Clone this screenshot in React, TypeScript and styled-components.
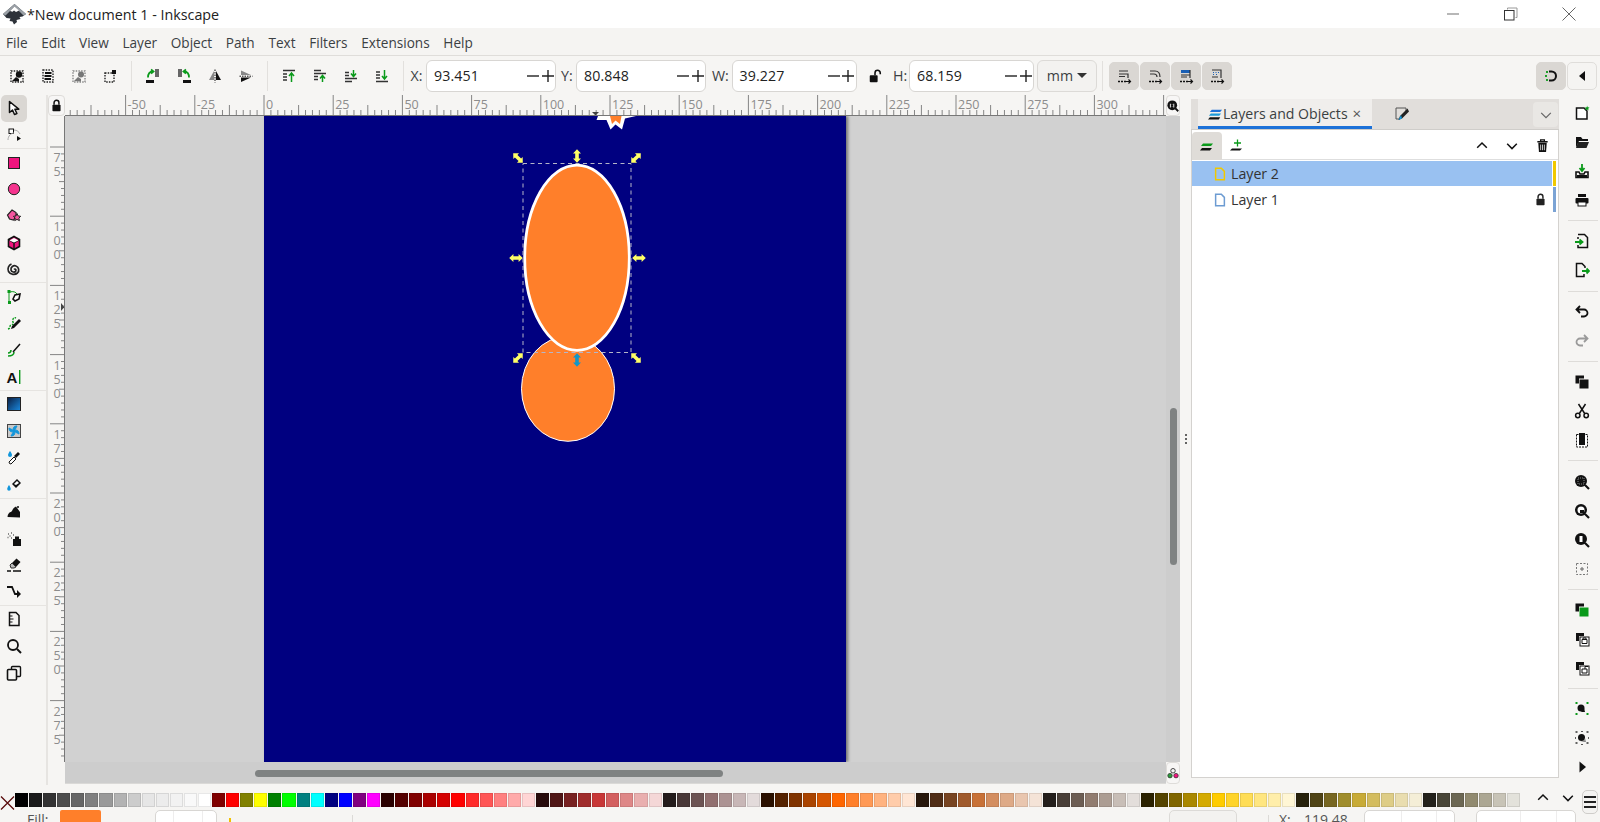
import React from "react";
import styled, { createGlobalStyle } from "styled-components";

const UI = '"Open Sans","Noto Sans",sans-serif';
const BG = "#f6f5f3";

const Global = createGlobalStyle`
  html, body { margin: 0; padding: 0; background: ${BG}; }
  body { font-family: ${UI}; color: #2e3436; overflow: hidden; }
  * { box-sizing: border-box; }
`;

const Shell = styled.div`
  width: 1600px; height: 822px; overflow: hidden; display: flex; flex-direction: column; background: ${BG};
`;
const TitleBar = styled.div`
  height: 28px; flex: none; background: #fff; display: flex; align-items: center; padding-left: 2px; padding-right: 2px;
`;
const TitleText = styled.span`
  font-size: 14.3px; margin-left: 0; color: #222; white-space: nowrap;
`;
const WindowControls = styled.div`margin-left: auto; display: flex;`;
const WindowButton = styled.div`
  width: 58px; height: 28px; display: flex; align-items: center; justify-content: center;
`;
const MenuBar = styled.div`
  height: 28px; flex: none; display: flex; align-items: center; padding: 2px 0 0 6px; gap: 13.700px;
  border-bottom: 1px solid #dfddda; font-size: 13.600px; background: #f5f4f2;
`;
const MenuItem = styled.span`color: #3b4043; white-space: nowrap;`;
const Toolbar = styled.div`
  height: 39px; flex: none; display: flex; align-items: center; padding-left: 1.500px; padding-right: 3px;
`;
const TopIcon = styled.div`
  width: 31px; height: 28px; flex: none; display: flex; align-items: center; justify-content: center;
`;
const VSep = styled.div`
  width: 1px; height: 30px; margin: 0 5.500px; background: #e2e0dd; flex: none;
`;
const Field = styled.div`display: flex; align-items: center; flex: none;`;
const FieldLabel = styled.span<{ $w: number; $m: number }>`
  width: ${(p) => p.$w}px; margin-left: ${(p) => p.$m}px; font-size: 14.200px; color: #3b4043; flex: none;
`;
const SpinBox = styled.div<{ $w: number }>`
  width: ${(p) => p.$w}px; height: 32px; background: #fff; border: 1px solid #d8d6d3; border-radius: 6px;
  display: flex; align-items: center; padding-left: 7px; position: relative; font-size: 14.200px; color: #222; flex: none;
`;
const SpinValue = styled.span`flex: 1; letter-spacing: .1px;`;
const SpinBtn = styled.span`
  width: 14.500px; height: 30px; display: flex; align-items: center; justify-content: center; flex: none;
`;
const LockSlot = styled.div`width: 36.400px; display: flex; justify-content: center; flex: none;`;
const UnitBox = styled.div`
  width: 60px; height: 32px; margin-left: 3px; border: 1px solid #dcdad7; border-radius: 6px; background: #f3f2f0;
  display: flex; align-items: center; justify-content: center; gap: 4px; font-size: 14.200px; flex: none; color: #3b4043;
`;
const Caret = styled.span`
  width: 0; height: 0; border-left: 5px solid transparent; border-right: 5px solid transparent; border-top: 5px solid #333;
`;
const ToggleRow = styled.div`display: flex; gap: 1px; flex: none;`;
const Toggle = styled.div<{ $flat?: boolean }>`
  width: 30px; height: 28px; border-radius: 5px; display: flex; align-items: center; justify-content: center;
  background: ${(p) => (p.$flat ? "#f5f4f2" : "#dad7d3")};
  border: 1px solid ${(p) => (p.$flat ? "#dfddda" : "#dad7d3")};
`;
const ToolbarEnd = styled.div`margin-left: auto; display: flex; gap: 1px;`;

const Main = styled.div`height: 690px; flex: none; display: flex;`;
const LeftTools = styled.div`
  width: 48px; flex: none; border-right: 2px solid #e6e4e1; display: flex; flex-direction: column;
`;
const ToolBtn = styled.div<{ $on?: boolean }>`
  width: 26px; height: 26.650px; margin-left: 1px; border-radius: 5px; flex: none;
  display: flex; align-items: center; justify-content: center;
  background: ${(p) => (p.$on ? "#dad7d3" : "transparent")};
`;
const ToolSep = styled.div`height: 1px; background: #e6e4e1; flex: none;`;

const CanvasGrid = styled.div`
  width: 1132px; flex: none; display: grid; grid-template-columns: 17px 1101px 14px; grid-template-rows: 21px 646px 22px;
`;
const CornerBtn = styled.div`
  background: #f7f6f5; border: 1px solid #dedcd9; border-radius: 4px; display: flex; align-items: center; justify-content: center;
`;
const HRuler = styled.div`border-bottom: 1px solid #777; overflow: hidden;`;
const VRuler = styled.div`border-right: 1px solid #777; overflow: hidden;`;
const RulerSvg = styled.svg`display: block;`;
const Canvas = styled.div`
  background: #d1d1d1; padding-left: 199px; overflow: hidden; display: flex;
`;
const Page = styled.div`
  width: 582px; height: 646px; background: #000080; flex: none; box-shadow: 2px 0 3px rgba(0,0,0,.45);
`;
const Drawing = styled.svg`display: block;`;
const VScroll = styled.div`background: #cdcdcd; padding: 292px 3px 0 4px;`;
const VThumb = styled.div`height: 157px; border-radius: 4px; background: #7f8282;`;
const HScroll = styled.div`background: #cdcdcd; padding: 8px 0 0 190px; border-bottom: 1px solid #dad9d7;`;
const HThumb = styled.div`width: 468px; height: 7px; border-radius: 4px; background: #7f8282;`;
const BlankCell = styled.div``;

const Gutter = styled.div`
  width: 11px; flex: none; display: flex; flex-direction: column; align-items: center; justify-content: flex-start; padding-top: 339px; gap: 2px;
`;
const GripDot = styled.span`width: 2px; height: 2px; background: #333; border-radius: 1px;`;
const Panel = styled.div`
  width: 368px; flex: none; margin: 4px 0 7px; display: flex; flex-direction: column;
`;
const TabStrip = styled.div`
  height: 31px; flex: none; background: #e1dedb; display: flex; padding-left: 7px; border-bottom: 1px solid #cfcdca;
`;
const ActiveTab = styled.div`
  width: 174px; height: 30px; background: #f0eeec; border-bottom: 3px solid #1c71d8; display: flex; align-items: center;
  padding: 2px 0 0 10px; font-size: 14.100px; color: #3a3f42; white-space: nowrap;
`;
const TabClose = styled.span`margin-left: 5px; font-size: 15px; color: #555; line-height: 1;`;
const IdleTab = styled.div`
  width: 60px; display: flex; align-items: center; justify-content: center; height: 29px;
`;
const TabMenu = styled.div`
  margin-left: auto; margin-right: 1px; margin-top: 3px; width: 25px; height: 25px; background: #e9e7e4; border-radius: 4px;
  display: flex; align-items: center; justify-content: center;
`;
const PanelBody = styled.div`
  flex: 1; background: #fff; border: 1px solid #d4d2cf; border-top: none; display: flex; flex-direction: column;
`;
const PanelTools = styled.div`
  height: 30px; flex: none; display: flex; align-items: center; border-bottom: 1px solid #dedede;
`;
const PanelToolBtn = styled.div<{ $on?: boolean }>`
  width: 30px; height: 28px; margin-top: 2px; display: flex; align-items: center; justify-content: center; border-radius: 4px 4px 0 0; flex: none;
  background: ${(p) => (p.$on ? "#dfdcd8" : "transparent")};
`;
const PanelToolsEnd = styled.div`margin-left: auto; display: flex; margin-right: 1px;`;
const LayerRow = styled.div`
  height: 26px; flex: none; display: flex; align-items: stretch; padding: 1px 0 0;
`;
const LayerMain = styled.div<{ $sel?: boolean }>`
  flex: 1; display: flex; align-items: center; padding-left: 21px; font-size: 14.200px; color: #333;
  background: ${(p) => (p.$sel ? "#99c1f1" : "#fff")};
`;
const LayerName = styled.span`margin-left: 4px; flex: 1;`;
const LayerLock = styled.span`display: flex; margin-right: 5px;`;
const LayerTag = styled.div<{ $c: string }>`
  width: 3px; margin: 0 2px 0 1px; background: ${(p) => p.$c};
`;
const RightTools = styled.div`
  width: 41px; flex: none; display: flex; flex-direction: column; padding-top: 3.500px; padding-left: 4px;
`;
const RightBtn = styled.div`
  height: 29px; flex: none; display: flex; align-items: center; justify-content: center;
`;
const RightSep = styled.div`
  height: 1px; margin: 5.700px 2px 5.700px 5px; flex: none; background: #dedcd9;
`;

const PaletteRow = styled.div`
  height: 23px; flex: none; padding-top: 8px; display: flex; align-items: flex-start;
`;
const NoneSwatch = styled.div`width: 15px; height: 14px; flex: none;`;
const Swatches = styled.div`width: 1506px; display: flex; flex: none;`;
const Swatch = styled.div<{ $c: string }>`
  flex: 1; height: 14px; margin-right: 1px; background: ${(p) => p.$c}; box-shadow: inset 0 0 0 1px rgba(0,0,0,.09);
`;
const PaletteNav = styled.div`
  display: flex; align-items: center; height: 10px; margin-left: 9px; margin-top: 0;
`;
const NavSlot = styled.div`width: 25px; display: flex; justify-content: center;`;
const MenuBtn = styled.div`
  width: 16px; height: 24px; margin-left: 2px; margin-top: -3px; border: 1px solid #cfcdca; border-radius: 5px;
  display: flex; flex-direction: column; justify-content: center; gap: 3px; padding: 0 1px; align-self: flex-start; background: #f3f2f0;
`;
const MenuBar3 = styled.span`height: 2px; background: #222; display: block;`;

const StatusBar = styled.div`
  flex: 1; display: flex; align-items: flex-start; padding: 2px 0 0 27px; overflow: hidden; font-size: 14px; color: #555; line-height: 20px;
`;
const StatusLabel = styled.span<{ $w: number; $m?: number }>`
  width: ${(p) => p.$w}px; margin-left: ${(p) => p.$m ?? 0}px; flex: none; white-space: nowrap;
`;
const FillChip = styled.div`width: 41px; height: 24px; background: #ff7f2a; border-radius: 2px; flex: none;`;
const StatusBox = styled.div<{ $w: number; $m: number }>`
  width: ${(p) => p.$w}px; margin-left: ${(p) => p.$m}px; height: 24px; background: #fff; border: 1px solid #d8d6d3; border-radius: 5px;
  display: flex; justify-content: flex-end; flex: none;
`;
const StatusCell = styled.span<{ $w: number }>`
  width: ${(p) => p.$w}px; border-left: 1px solid #eeeded; flex: none;
`;
const StatusMark = styled.div`width: 2px; height: 6px; margin: 8px 0 0 12px; background: #f0c000; flex: none;`;
const StatusRule = styled.div<{ $m: number }>`
  width: 1px; height: 20px; margin: 5px 0 0 ${(p) => p.$m}px; background: #dcdad7; flex: none;
`;
const PlainBox = styled.div`
  width: 68px; height: 24px; margin-left: 816px; border: 1px solid #dcdad7; border-radius: 5px; background: #f3f2f0; flex: none;
`;

const Ico = ({ s = 16, children }: { s?: number; children: React.ReactNode }) => (
  <svg width={s} height={s} viewBox="0 0 16 16" fill="none">{children}</svg>
);
const dash = { stroke: "#222", strokeWidth: 1.4, strokeDasharray: "1.5 1.2" };
const G = "#0a9a1a";
const K = "#111";

const selectAll = (
  <Ico><rect x="2" y="3" width="12" height="11" {...dash} /><circle cx="10" cy="6.5" r="3.2" fill={K} /><path d="M3 13l4-4 3 2v2.5z" fill={K} /></Ico>
);
const selectLayers = (
  <Ico><rect x="3" y="2" width="10" height="12" {...dash} /><path d="M5 5h6.5M4.500 8h7M4.500 11h6.500" stroke={K} strokeWidth="1.8" /></Ico>
);
const invert = (
  <Ico><rect x="2" y="3" width="12" height="11" stroke="#888" strokeWidth="1.4" strokeDasharray="1.5 1.2" /><circle cx="10" cy="6.500" r="3" fill="#777" /><path d="M3 13l4-4 3 2v2.500z" fill="#777" /></Ico>
);
const deselect = (
  <Ico><rect x="3" y="5" width="9" height="9" {...dash} /><rect x="10" y="2" width="4" height="4" fill={K} /></Ico>
);
const rotL = (
  <Ico><rect x="1" y="12" width="8" height="3" fill={K} /><rect x="10" y="1" width="4" height="8" fill="#666" /><path d="M3 9.500c0-4 1.500-6 5-6M6 1.500L8.500 3.500 6 5.500" stroke={G} strokeWidth="1.8" /></Ico>
);
const rotR = (
  <Ico><rect x="7" y="12" width="8" height="3" fill={K} /><rect x="2" y="1" width="4" height="8" fill="#666" /><path d="M13 9.500c0-4-1.500-6-5-6M10 1.500L7.500 3.500 10 5.500" stroke={G} strokeWidth="1.800" /></Ico>
);
const flipH = (
  <Ico><path d="M7 3L2 12h5z" fill="#888" /><path d="M9 3l5 9H9z" fill={K} /><path d="M8 1.500v13" stroke={K} strokeDasharray="1.500 1" /></Ico>
);
const flipV = (
  <Ico><path d="M3 2.500L13 7H3z" fill="#888" /><path d="M3 9.500h10L3 14z" fill={K} /><path d="M1.500 8.200h13" stroke={K} strokeDasharray="1.500 1" /></Ico>
);
const raiseTop = (
  <Ico><path d="M2 2.500h12M2 6h4M2 9h4M2 12h4" stroke="#333" strokeWidth="1.300" /><path d="M10.500 14V6M8 8l2.500-3L13 8" stroke={G} strokeWidth="1.500" /></Ico>
);
const raise = (
  <Ico><path d="M2 5.500h12M2 8.500h4M2 11.500h4M2 2.500h7" stroke="#333" strokeWidth="1.300" /><path d="M10.500 14V8M8 10.500l2.500-3 2.500 3" stroke={G} strokeWidth="1.500" /></Ico>
);
const lower = (
  <Ico><path d="M2 10.500h12M2 7.500h4M2 4.500h4M2 13.500h7" stroke="#333" strokeWidth="1.300" /><path d="M10.500 2v6M8 5.500l2.500 3 2.500-3" stroke={G} strokeWidth="1.500" /></Ico>
);
const lowerBottom = (
  <Ico><path d="M2 13.500h12M2 10h4M2 7h4M2 4h4" stroke="#333" strokeWidth="1.300" /><path d="M10.500 2v8M8 8l2.500 3L13 8" stroke={G} strokeWidth="1.500" /></Ico>
);
const topIcons = [[selectAll, selectLayers, invert, deselect], [rotL, rotR, flipH, flipV], [raiseTop, raise, lower, lowerBottom]];

const mini = (inner: React.ReactNode) => (
  <Ico>
    {inner}
    <path d="M2 13.500h8" stroke={K} strokeWidth="1.400" strokeDasharray="2 1" />
    <path d="M10 13.500h4M12.500 11.500l2 2-2 2" stroke={K} strokeWidth="1.200" />
  </Ico>
);
const toggles = [
  mini(<path d="M3 3h9M3 6h9v4M3 8.500h6" stroke="#333" strokeWidth="1.200" />),
  mini(<path d="M3 3h5c3 0 5 2 5 6M3 6h4c2 0 3 1 3 3" stroke="#333" strokeWidth="1.200" />),
  mini(<><rect x="3" y="2" width="9" height="3" fill="#1a5fb4" /><path d="M3 7h9M12 2v8M3 9h6" stroke="#333" strokeWidth="1.200" /></>),
  mini(<><path d="M3 2h9v8M3 9h6" stroke="#333" strokeWidth="1.200" /><path d="M4 4.500h1M6.500 4.500h1M9 4.500h1M4 6.500h1M7 6.500h1" stroke="#1a5fb4" /></>),
];

const lockIcon = (c = "#111", s = 14) => (
  <Ico s={s}><rect x="3" y="7" width="10" height="8" rx="1" fill={c} /><path d="M5 7V4.500a3 3 0 016 0V7" stroke={c} strokeWidth="1.800" /></Ico>
);
const openLock = (
  <Ico s={14}><rect x="2" y="7" width="9" height="8" rx="1" fill="#111" /><path d="M8 7V4.500a3 3 0 016 0V6" stroke="#111" strokeWidth="1.800" /></Ico>
);
const pink = "#f0147e";
const leftTools: (React.ReactNode | "sep")[] = [
  <Ico><path d="M3.500 1.500v11l3-2.500 2 4.500 2.400-1-2-4.300h3.900z" fill="#fff" stroke={K} strokeWidth="1.500" strokeLinejoin="round" /></Ico>,
  <Ico><rect x="3" y="2" width="4.500" height="4.500" fill="#fff" stroke={K} /><path d="M2 13c0-4 3-7 6-7M8 3c3 0 5 2 6 4" stroke="#aaa" /><path d="M11 9l4 2.500-4 2.500z" fill={K} /></Ico>,
  "sep",
  <Ico><rect x="2.500" y="2.500" width="11" height="11" fill={pink} stroke="#222" /></Ico>,
  <Ico><circle cx="8" cy="8" r="5.700" fill="#f5348e" stroke="#222" /></Ico>,
  <Ico><path d="M6 2l4 2.500 0 4-2.500 3.500-4-1L1.500 7z" fill="#f5559f" stroke="#222" strokeWidth="1.200" /><path d="M11 5.500l1.200 2.500 2.500.3-1.800 1.800.5 2.500-2.400-1.200-2.300 1.200.5-2.500L7.400 8.300l2.500-.3z" fill="#f5559f" stroke="#222" /></Ico>,
  <Ico><path d="M8 1.500l5.500 3v7L8 14.500l-5.500-3v-7z" fill={pink} stroke={K} strokeWidth="1.600" /><path d="M2.500 4.500L8 8l5.500-3.500M8 8v6.500" stroke={K} strokeWidth="1.400" /><path d="M3.500 5.500L8 3l4.500 2.500L8 7.500z" fill="#fff" /></Ico>,
  <Ico><path d="M8 8.500c.8-1 2.500 0 1.800 1.500-1 1.800-4.300 1.300-4.800-1-.6-3 2.500-5 5-4 3 1 3.500 5 1.500 7-2.300 2-7 2-9-1.500-1.400-3 .2-6.500 3-7.500" stroke="#222" strokeWidth="1.700" /></Ico>,
  "sep",
  <Ico><rect x="1.500" y="1" width="3" height="3" fill={G} /><rect x="2" y="12" width="3" height="3" fill={G} /><path d="M3 4v8M4 3c3-1 6 0 7 2" stroke={G} strokeWidth="1" /><path d="M7 10l2-4 5-1-1 5-4 2z" fill="#fff" stroke={K} strokeWidth="1.600" /></Ico>,
  <Ico><path d="M2 14c3-1 1-3 3-4s3 0 2-3 1-5 3-4" stroke={G} strokeWidth="1.400" strokeDasharray="2 1" /><path d="M5 14l1-3 7-7 2 2-7 7z" fill={K} /></Ico>,
  <Ico><path d="M2 11c2 0 3-1 3-3M2 14c3 0 6-1 6-4" stroke={G} strokeWidth="1.500" /><path d="M7 10l7-8" stroke={K} strokeWidth="1.500" /></Ico>,
  <Ico><text x="0.500" y="14" fontSize="15" fontWeight="700" fontFamily="Liberation Sans" fill={K}>A</text><rect x="13" y="1" width="1.400" height="14" fill={G} /></Ico>,
  "sep",
  <Ico><defs><linearGradient id="gr" x1="0" y1="0" x2="1" y2="1"><stop offset="0" stopColor="#0a1c40" /><stop offset="1" stopColor="#1a8ae0" /></linearGradient></defs><rect x="1.500" y="1.500" width="13" height="13" fill="url(#gr)" stroke="#222" /></Ico>,
  <Ico><rect x="1.500" y="1.500" width="13" height="13" fill="#c9c9c9" stroke="#444" /><path d="M8 8C6 5 8 3 11 3 10 5 9 7 8 8c3-2 5 0 5 3-2-1-4-2-5-3 2 3 0 5-3 5 1-2 2-4 3-5-3 2-5 0-5-3 2 1 4 2 5 3z" fill="#1296db" stroke="#1296db" /></Ico>,
  <Ico><path d="M4 1c1.500 2 2 3 2 4a2 2 0 01-4 0c0-1 1-2.500 2-4z" fill="#1296db" /><path d="M5 14l-1.500-.5L3 12l5-5 2 2-5 5z" fill="#fff" stroke={K} /><path d="M8 6l4-4 2 2-4 4z" fill={K} /></Ico>,
  <Ico><path d="M3 9c1 1.500 1.800 3 1.800 4a1.800 1.800 0 01-3.600 0c0-1 .8-2.500 1.800-4z" fill="#1296db" /><path d="M6 8l5-5 4 4-5 5z" fill={K} /><path d="M8 8l3-3 2 2-3 2z" fill="#fff" /></Ico>,
  "sep",
  <Ico><path d="M1.500 13c0-3 2-5 3.500-5 1 0 1.500-4 5-5.500L14 8v5.500z" fill={K} /><circle cx="12" cy="3" r="1" fill={K} /></Ico>,
  <Ico><rect x="7" y="8" width="8" height="7" fill={K} /><rect x="9" y="5.500" width="4" height="2.500" fill={K} /><path d="M2 3h1M5 2h1M3.500 5h1M1.500 6.500h1M5 7h1M7 4h1" stroke="#666" strokeWidth="1.500" /></Ico>,
  <Ico><path d="M6 6l4.500-4.500 4 3.500L10 10z" fill={K} /><path d="M4 8l2-2 4 4-2 1H5z" fill="#bbb" stroke="#333" /><path d="M1 14h4M7 14h8" stroke={K} strokeWidth="1.300" /></Ico>,
  <Ico><path d="M1 3h5l3 7h4" stroke={K} strokeWidth="1.800" /><path d="M11 6l4 4-4 4z" fill={K} /></Ico>,
  "sep",
  <Ico><path d="M3.500 1.500H10l3 3v10H3.500z" stroke={K} strokeWidth="1.500" /><path d="M3.500 5h3M3.500 8h4M3.500 11h3" stroke={K} /></Ico>,
  <Ico><circle cx="7" cy="7" r="5" stroke={K} strokeWidth="1.800" /><path d="M11 11l4 4" stroke={K} strokeWidth="2" /></Ico>,
  <Ico><rect x="5.500" y="1.500" width="9" height="10" rx="1" stroke={K} strokeWidth="1.400" /><rect x="1.500" y="4.500" width="9" height="10.500" rx="1" fill={BG} stroke={K} strokeWidth="1.600" /></Ico>,
];

const zoomBase = (inner: React.ReactNode) => (
  <Ico><circle cx="7" cy="7" r="6" fill={K} /><path d="M11 11l4 4" stroke={K} strokeWidth="2.200" />{inner}</Ico>
);
const stack = (c: string, inner?: React.ReactNode) => (
  <Ico><path d="M2 2h8v3H5v5H2z" fill={K} /><rect x="6" y="6" width="9" height="9" fill={c} stroke={c === "#fff" ? K : c} />{inner}</Ico>
);
const rightTools: (React.ReactNode | "sep")[] = [
  <Ico><path d="M2.500 3H10l3 3v8H2.500z" fill="#fff" stroke={K} strokeWidth="1.500" /><path d="M13 .5l.7 1.800 1.800.2-1.300 1.200.4 1.800-1.600-1-1.600 1 .4-1.800L11 2.500l1.800-.2z" fill={G} /></Ico>,
  <Ico><path d="M2 3h5l1.500 2H14v2H5L2 13.500z" fill={K} /><path d="M4 8h11l-2.500 6H2z" fill="#222" /></Ico>,
  <Ico><path d="M8 1v6M5.500 5L8 8l2.500-3" stroke={G} strokeWidth="1.800" /><path d="M2 9h3l1 2h4l1-2h3v5.500H2z" fill={BG} stroke={K} strokeWidth="1.600" /><rect x="3" y="12" width="10" height="2" fill={K} /></Ico>,
  <Ico><rect x="4" y="2" width="8" height="3" fill={K} /><rect x="1.500" y="6" width="13" height="5.500" rx="1" fill={K} /><rect x="4" y="10" width="8" height="4" fill="#fff" stroke={K} /></Ico>,
  "sep",
  <Ico><path d="M4 1.500h6.500l3 3v10H4V12" stroke={K} strokeWidth="1.500" /><path d="M4 4v2" stroke={K} strokeWidth="1.500" /><path d="M1 9h7M5.500 6.500L8.500 9 5.500 11.500" stroke={G} strokeWidth="1.800" /></Ico>,
  <Ico><path d="M10 12v2.500H2.500v-13H8l3 3V6" stroke={K} strokeWidth="1.500" /><path d="M8 9h7M12.500 6.500l2.500 2.500-2.500 2.500" stroke={G} strokeWidth="1.800" /></Ico>,
  "sep",
  <Ico><path d="M3 5.500h7a3.500 3.500 0 010 7H7M6 2L2.500 5.500 6 9" stroke={K} strokeWidth="1.800" /></Ico>,
  <Ico><path d="M13 5.500H6a3.500 3.500 0 000 7h3M10 2L13.500 5.500 10 9" stroke="#9a9a9a" strokeWidth="1.800" /></Ico>,
  "sep",
  <Ico><path d="M1.500 1.500H10v3H5v5H1.500z" fill={K} /><rect x="5.500" y="5.500" width="9" height="9" fill={K} /></Ico>,
  <Ico><circle cx="3.800" cy="12.500" r="2.200" stroke={K} strokeWidth="1.500" /><circle cx="12.200" cy="12.500" r="2.200" stroke={K} strokeWidth="1.500" /><path d="M5 11L11.500 1M11 11L4.500 1" stroke={K} strokeWidth="1.500" /></Ico>,
  <Ico><rect x="2.500" y="2.500" width="11" height="12.500" fill="#fff" stroke={K} strokeDasharray="2 1" /><rect x="5" y="1" width="6" height="12" fill={K} /></Ico>,
  "sep",
  zoomBase(<rect x="4" y="4" width="6" height="6" stroke="#888" strokeDasharray="1 1" />),
  zoomBase(<><circle cx="7" cy="7" r="3.500" fill="#fff" /><rect x="6" y="7" width="4" height="3" fill={K} /></>),
  zoomBase(<rect x="5" y="3.500" width="4" height="7" fill="#fff" stroke={K} />),
  <Ico><rect x="2.500" y="2.500" width="11" height="11" stroke="#777" strokeDasharray="2 1.500" /><path d="M6 8h4M8 6v4" stroke="#666" /></Ico>,
  "sep",
  <Ico><path d="M1.500 1.500H10v3H5v5H1.500z" fill={K} /><rect x="5.500" y="5.500" width="9" height="9" fill="#0a9a1a" /></Ico>,
  stack("#fff", <path d="M8 8.500h5v4H8zM9 8.500V7h3v1.500" stroke={K} />),
  stack("#fff", <path d="M8 9h5v4H8zM11 9V6.500h3" stroke={K} />),
  "sep",
  <Ico><circle cx="7" cy="7" r="3.500" fill={K} /><path d="M7 11l3-4 1 4z" fill={K} /><path d="M1.500 2h2M12.500 2h2M1.500 13h2M12.500 13h2" stroke={G} strokeWidth="2.200" /></Ico>,
  <Ico><circle cx="7.500" cy="7.500" r="3.500" fill={K} /><path d="M6 12l4-1 1-3 1 4z" fill="#888" /><path d="M1.500 2h2M12.500 2h2M1.500 13h2M12.500 13h2M8 1v1M8 14v1M1 8h1M14 8h1" stroke="#333" strokeWidth="1.600" /></Ico>,
  <Ico><path d="M5.500 2.500L12 8l-6.500 5.500z" fill={K} /></Ico>,
];

const chevUp = <Ico s={14}><path d="M2.500 10L8 4.500 13.500 10" stroke={K} strokeWidth="1.700" /></Ico>;
const chevDown = <Ico s={14}><path d="M2.500 5.500L8 11l5.500-5.500" stroke={K} strokeWidth="1.700" /></Ico>;
const trash = (
  <Ico s={15}><path d="M2.500 4h11M6 4V2h4v2" stroke={K} strokeWidth="1.400" /><path d="M3.500 5h9l-.7 10H4.200z" fill={K} /><path d="M6 7v6M8 7v6M10 7v6" stroke="#fff" strokeWidth=".8" /></Ico>
);
const docIcon = (c: string) => (
  <Ico s={14}><path d="M3 1.500h6.500l3.500 3.500v9.500H3z" stroke={c} strokeWidth="1.700" /></Ico>
);

const PALETTE = "#000000 #1a1a1a #333333 #4d4d4d #666666 #808080 #999999 #b3b3b3 #cccccc #e6e6e6 #ececec #f2f2f2 #f9f9f9 #ffffff #800000 #ff0000 #808000 #ffff00 #008000 #00ff00 #008080 #00ffff #000080 #0000ff #800080 #ff00ff #2b0000 #550000 #800000 #aa0000 #d40000 #ff0000 #ff2a2a #ff5555 #ff8080 #ffaaaa #ffd5d5 #280b0b #501616 #782121 #a02c2c #c83737 #d35f5f #de8787 #e9afaf #f4d7d7 #241c1c #483737 #6c5353 #916f6f #ac9393 #c8b7b7 #e3dbdb #2b1100 #552200 #803300 #aa4400 #d45500 #ff6600 #ff7f2a #ff9955 #ffb380 #ffccaa #ffe6d5 #28170b #502d16 #784421 #a05a2c #c87137 #d38d5f #deaa87 #e9c6af #f4e3d7 #241f1c #483e37 #6c5d53 #917c6f #ac9d93 #c8beb7 #e3dedb #2b2200 #554400 #806600 #aa8800 #d4aa00 #ffcc00 #ffd42a #ffdd55 #ffe680 #ffeeaa #fff6d5 #28220b #504416 #786721 #a08d2c #c8ab37 #d3bc5f #decd87 #e9ddaf #f4eed7 #24221c #484537 #6c6753 #918a6f #aca793 #c8c4b7 #e3e2db".split(" ");

const STEP = 69.2;
const tick = "#858585";
const label = "#8c8c8c";

function TopRuler() {
  const lines: React.ReactNode[] = [];
  const labels: React.ReactNode[] = [];
  for (let i = -30; i <= 170; i++) {
    const x = 199 + (i * STEP) / 10;
    if (x < 0 || x > 1101) continue;
    const m = ((i % 10) + 10) % 10;
    const y1 = m === 0 ? 0 : m === 5 ? 10 : 15;
    lines.push(<line key={i} x1={x} x2={x} y1={y1} y2={20} stroke={tick} strokeWidth="1" />);
    if (m === 0 && x > 30 && x < 1080) {
      labels.push(
        <text key={i} x={x + 2} y={14} fontSize="12.5" fill={label} fontFamily={UI}>{(i / 10) * 25}</text>
      );
    }
  }
  return (
    <RulerSvg width="1101" height="20">
      {lines}
      {labels}
      <path d="M527 17h7l-3.500 3.500z" fill="#444" />
    </RulerSvg>
  );
}
function SideRuler() {
  const lines: React.ReactNode[] = [];
  const labels: React.ReactNode[] = [];
  for (let i = 30; i < 120; i++) {
    const y = 31 + ((i - 30) * STEP) / 10;
    if (y > 646) continue;
    const m = i % 10;
    const x1 = m === 0 ? 2 : m === 5 ? 11 : 13;
    lines.push(<line key={i} x1={x1} x2={16} y1={y} y2={y} stroke={tick} strokeWidth="1" />);
    if (m === 0) {
      String((i / 10) * 25).split("").forEach((d, k) => {
        labels.push(
          <text key={`${i}-${k}`} x={5.5} y={y + 15 + k * 14} fontSize="12.5" fill={label} fontFamily={UI}>{d}</text>
        );
      });
    }
  }
  return (
    <RulerSvg width="16" height="646">
      {lines}
      {labels}
      <path d="M13 187l3.500 4-3.500 4z" fill="#444" />
    </RulerSvg>
  );
}

const ARROW = "M-6.800 0L-2.600 -4V-1.800H2.600V-4L6.800 0L2.600 4V1.800H-2.600V4Z";
const handles: [number, number, number, string][] = [
  [518, 158, 45, "#ffff66"], [577, 156, 90, "#ffff66"], [636, 158, -45, "#ffff66"],
  [516, 258, 0, "#ffff66"], [639, 258, 0, "#ffff66"],
  [518, 358, -45, "#ffff66"], [577, 360, 90, "#1296c8"], [636, 358, 45, "#ffff66"],
];

function Artwork() {
  return (
    <Drawing width="582" height="646" viewBox="264 116 582 646">
      <path d="M598 116L596.500 120H606.500L610.500 129.500 615.500 124.500 622 129.500 625 118.500 636 116Z" fill="#fff" />
      <path d="M610 116L612 124 615.500 120.500 620 124 621.500 116Z" fill="#ff7f2a" />
      <ellipse cx="568" cy="388.800" rx="46.500" ry="52.500" fill="#ff7f2a" stroke="#fff" strokeWidth="1" />
      <ellipse cx="577" cy="257.700" rx="52.300" ry="92.600" fill="#ff7f2a" stroke="#fff" strokeWidth="2.800" />
      <rect x="523" y="163.500" width="108" height="189" stroke="#b5b5c8" strokeWidth="1" strokeDasharray="4 3.500" fill="none" />
      {handles.map(([x, y, r, c]) => (
        <path key={`${x}-${y}`} d={ARROW} fill={c} transform={`translate(${x} ${y}) rotate(${r})`} />
      ))}
    </Drawing>
  );
}

function Logo() {
  return (
    <svg width="25" height="24" viewBox="0 0 25 24">
      <path d="M12.500 2L24 12l-3.500 2.500-3 .5 1 2-4 1 .5 2-3 2.500-1.500-3-3-.5 1-2.500-4-.5L1 12z" fill="#2d3239" />
      <path d="M12.500 2L1 12l2.500 1.500L12.500 4.500l9 9L24 12z" fill="#9aa0a6" />
      <path d="M12.500 4.500L8 9l2.500 .8L12 8.500l2 1.500 3-1.500z" fill="#fff" />
    </svg>
  );
}

function Spin({ value }: { value: string }) {
  return (
    <>
      <SpinValue>{value}</SpinValue>
      <SpinBtn><svg width="12" height="12"><path d="M0 6h12" stroke="#222" strokeWidth="1.400" /></svg></SpinBtn>
      <SpinBtn><svg width="12" height="12"><path d="M0 6h12M6 0v12" stroke="#222" strokeWidth="1.400" /></svg></SpinBtn>
    </>
  );
}

export default function App() {
  return (
    <Shell>
      <Global />
      <TitleBar>
        <Logo />
        <TitleText>*New document 1 - Inkscape</TitleText>
        <WindowControls>
          <WindowButton><svg width="14" height="14"><path d="M1 7h12" stroke="#888" strokeWidth="1.200" /></svg></WindowButton>
          <WindowButton><svg width="14" height="14"><path d="M3.500 2.500V1h9.500v9.500h-1.500" stroke="#999" fill="none" /><rect x="0.500" y="3.500" width="9.500" height="9.500" stroke="#333" fill="none" /></svg></WindowButton>
          <WindowButton><svg width="14" height="14"><path d="M.5.500l13 13M13.500.500l-13 13" stroke="#666" /></svg></WindowButton>
        </WindowControls>
      </TitleBar>
      <MenuBar>
        {["File", "Edit", "View", "Layer", "Object", "Path", "Text", "Filters", "Extensions", "Help"].map((m) => (
          <MenuItem key={m}>{m}</MenuItem>
        ))}
      </MenuBar>
      <Toolbar>
        {topIcons.map((g, i) => (
          <React.Fragment key={i}>
            {g.map((ic, j) => <TopIcon key={j}>{ic}</TopIcon>)}
            <VSep />
          </React.Fragment>
        ))}
        <Field><FieldLabel $w={15.5} $m={1}>X:</FieldLabel><SpinBox $w={130}><Spin value="93.451" /></SpinBox></Field>
        <Field><FieldLabel $w={15} $m={5}>Y:</FieldLabel><SpinBox $w={130}><Spin value="80.848" /></SpinBox></Field>
        <Field><FieldLabel $w={19.6} $m={6}>W:</FieldLabel><SpinBox $w={125}><Spin value="39.227" /></SpinBox></Field>
        <LockSlot>{openLock}</LockSlot>
        <Field><FieldLabel $w={16} $m={0}>H:</FieldLabel><SpinBox $w={125}><Spin value="68.159" /></SpinBox></Field>
        <UnitBox>mm<Caret /></UnitBox>
        <VSep />
        <ToggleRow>
          {toggles.map((ic, i) => <Toggle key={i}>{ic}</Toggle>)}
        </ToggleRow>
        <ToolbarEnd>
          <Toggle>
            <Ico><path d="M6 3.500h2.500a4.500 4.500 0 010 9H6" stroke={K} strokeWidth="2" /><path d="M4 3v2M3 7v2M4 11v2" stroke={G} strokeWidth="1.800" /></Ico>
          </Toggle>
          <Toggle $flat><Ico><path d="M11 3v10L5 8z" fill={K} /></Ico></Toggle>
        </ToolbarEnd>
      </Toolbar>
      <Main>
        <LeftTools>
          {leftTools.map((t, i) =>
            t === "sep" ? <ToolSep key={i} /> : <ToolBtn key={i} $on={i === 0}>{t}</ToolBtn>
          )}
        </LeftTools>
        <CanvasGrid>
          <CornerBtn>{lockIcon("#111", 13)}</CornerBtn>
          <HRuler><TopRuler /></HRuler>
          <CornerBtn>
            <Ico s={14}><circle cx="7" cy="7" r="6.500" fill={K} /><path d="M11 11l4 4" stroke={K} strokeWidth="2.400" /><path d="M4.500 5v5M9 5v5M6.800 6v.5M6.800 8.500v.5" stroke="#fff" strokeWidth="1.200" /></Ico>
          </CornerBtn>
          <VRuler><SideRuler /></VRuler>
          <Canvas>
            <Page><Artwork /></Page>
          </Canvas>
          <VScroll><VThumb /></VScroll>
          <BlankCell />
          <HScroll><HThumb /></HScroll>
          <CornerBtn>
            <Ico><circle cx="8" cy="5" r="3" stroke="#333" strokeWidth="1.200" /><circle cx="4" cy="11.500" r="3" fill="#2a9a3a" stroke="#333" /><circle cx="12" cy="11.500" r="3" fill="#f0147e" stroke="#333" /></Ico>
          </CornerBtn>
        </CanvasGrid>
        <Gutter><GripDot /><GripDot /><GripDot /></Gutter>
        <Panel>
          <TabStrip>
            <ActiveTab>
              <Ico s={15}><path d="M4 4h11L13 6.500H2z" fill="#1c71d8" /><path d="M3 8h11l-2 2.500H1z" fill="#1b9ad8" /><path d="M2 12h11l-1.500 2.500H0z" fill="#111" /></Ico>
              Layers and Objects
              <TabClose>×</TabClose>
            </ActiveTab>
            <IdleTab>
              <Ico><path d="M2 2h10v4M2 2v11h4" stroke="#555" /><path d="M13.500 2.500L6 10l-1.500 4L8 12.500l7-7z" fill="#222" /><path d="M7 9l-2.500 5L8 12.500z" fill="#1296db" /></Ico>
            </IdleTab>
            <TabMenu>
              <Ico s={14}><path d="M2.500 5.500L8 11l5.500-5.500" stroke="#666" strokeWidth="1.400" /></Ico>
            </TabMenu>
          </TabStrip>
          <PanelBody>
            <PanelTools>
              <PanelToolBtn $on>
                <Ico><path d="M4 5.500h10L12 8H2z" fill={G} /><path d="M3 10h10l-2 2.500H1z" fill={K} /></Ico>
              </PanelToolBtn>
              <PanelToolBtn>
                <Ico><path d="M8.500 1.500v7M5 5h7" stroke={G} strokeWidth="1.300" /><path d="M3 10.500h10l-2 2H1z" fill={K} /></Ico>
              </PanelToolBtn>
              <PanelToolsEnd>
                <PanelToolBtn>{chevUp}</PanelToolBtn>
                <PanelToolBtn>{chevDown}</PanelToolBtn>
                <PanelToolBtn>{trash}</PanelToolBtn>
              </PanelToolsEnd>
            </PanelTools>
            <LayerRow>
              <LayerMain $sel>{docIcon("#f0c800")}<LayerName>Layer 2</LayerName></LayerMain>
              <LayerTag $c="#f0c800" />
            </LayerRow>
            <LayerRow>
              <LayerMain>{docIcon("#6c9bd2")}<LayerName>Layer 1</LayerName><LayerLock>{lockIcon("#222", 13)}</LayerLock></LayerMain>
              <LayerTag $c="#7ba3d4" />
            </LayerRow>
          </PanelBody>
        </Panel>
        <RightTools>
          {rightTools.map((t, i) => (t === "sep" ? <RightSep key={i} /> : <RightBtn key={i}>{t}</RightBtn>))}
        </RightTools>
      </Main>
      <PaletteRow>
        <NoneSwatch>
          <svg width="15" height="14"><path d="M1 .5l13 13M14 .5l-13 13" stroke="#5a0c0c" strokeWidth="1.300" /></svg>
        </NoneSwatch>
        <Swatches>
          {PALETTE.map((c, i) => <Swatch key={i} $c={c} />)}
        </Swatches>
        <PaletteNav>
          <NavSlot>{chevUp}</NavSlot>
          <NavSlot>{chevDown}</NavSlot>
        </PaletteNav>
        <MenuBtn><MenuBar3 /><MenuBar3 /><MenuBar3 /></MenuBtn>
      </PaletteRow>
      <StatusBar>
        <StatusLabel $w={33}>Fill:</StatusLabel>
        <FillChip />
        <StatusBox $w={62} $m={54}><StatusCell $w={29} /><StatusCell $w={14} /></StatusBox>
        <StatusMark />
        <StatusRule $m={121} />
        <PlainBox />
        <StatusRule $m={31} />
        <StatusLabel $w={25} $m={10}>X:</StatusLabel>
        <StatusLabel $w={60}>119.48</StatusLabel>
        <StatusBox $w={91} $m={0}><StatusCell $w={35} /><StatusCell $w={18} /></StatusBox>
        <StatusBox $w={100} $m={21}><StatusCell $w={36} /><StatusCell $w={19} /></StatusBox>
      </StatusBar>
    </Shell>
  );
}
